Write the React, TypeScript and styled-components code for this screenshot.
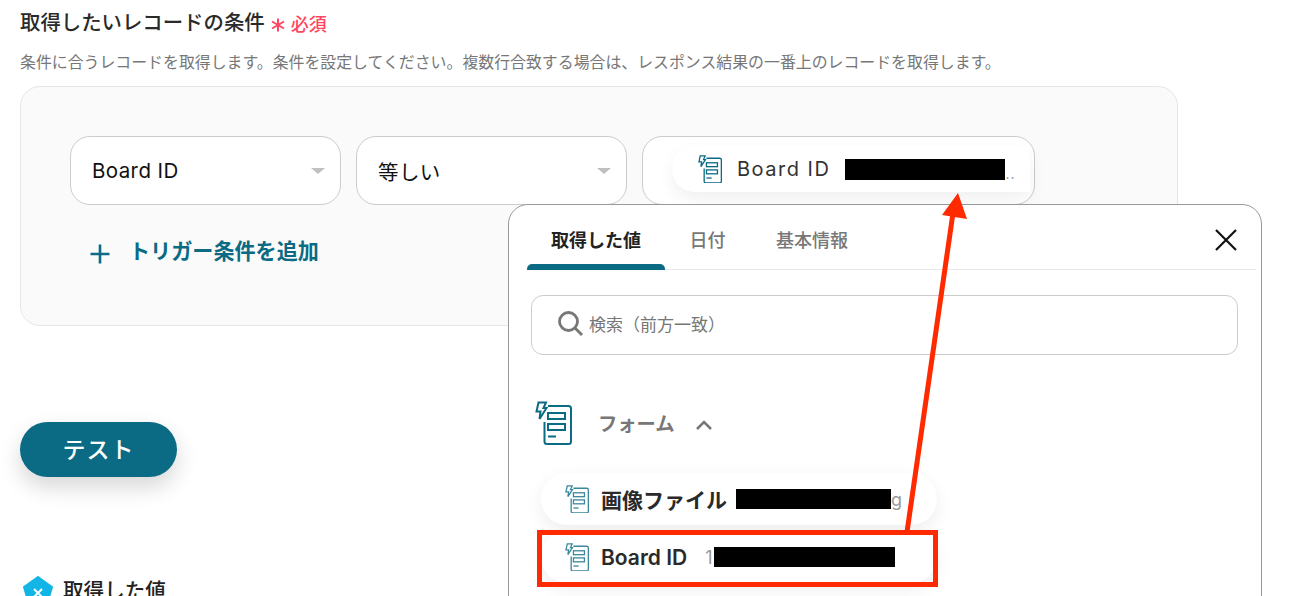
import styled, { createGlobalStyle } from 'styled-components'
import { Fragment } from 'react'

const teal = '#0b6a84'

const GlobalStyle = createGlobalStyle`
  html, body {
    margin: 0;
    background: white;
    font-family: Inter, "Noto Sans CJK JP", "Noto Sans", sans-serif;
  }
`

const Page = styled.div`
  position: relative;
  width: 1290px;
  height: 596px;
  overflow: hidden;
  box-sizing: border-box;
  padding: 10px 0 0 20px;
  color: #222;
`

const TitleRow = styled.div`
  display: flex;
  align-items: center;
  height: 26px;
`

const Title = styled.h2`
  margin: 0;
  font-size: 20.4px;
  line-height: 26px;
  font-weight: 500;
  color: #2a2a2a;
`

const Required = styled.span`
  display: flex;
  align-items: center;
  margin-left: 6px;
  font-size: 18px;
  font-weight: 500;
  color: #ff4560;
  svg {
    margin: 3px 6px 0 0;
  }
`

const Description = styled.p`
  margin: 16px 0 13px;
  font-size: 15.9px;
  line-height: 21px;
  white-space: nowrap;
  color: #777;
`

const Panel = styled.div`
  box-sizing: border-box;
  width: 1158px;
  height: 240px;
  padding: 49px 0 0 49px;
  background: #fafafa;
  border: 1px solid #e6e6e6;
  border-radius: 20px;
`

const FieldRow = styled.div`
  display: flex;
  gap: 15px;
`

const Field = styled.div<{ $width: number; $inset?: number }>`
  position: relative;
  box-sizing: border-box;
  display: flex;
  align-items: center;
  width: ${p => p.$width}px;
  height: 69px;
  padding-left: ${p => p.$inset ?? 21}px;
  background: white;
  border: 1px solid #ccc;
  border-radius: 20px;
  font-size: 20.5px;
  letter-spacing: 0.4px;
  color: #111;
`

const Caret = styled.i`
  position: absolute;
  right: 15px;
  top: 31px;
  width: 0;
  height: 0;
  border-left: 7px solid transparent;
  border-right: 7px solid transparent;
  border-top: 6px solid #c0c0c0;
`

const ValueChip = styled.div`
  display: flex;
  align-items: center;
  box-sizing: border-box;
  width: 358px;
  height: 46px;
  margin: 0 0 3px 9px;
  padding-left: 26px;
  background: white;
  border-radius: 23px 0 0 23px;
  box-shadow: 0 8px 18px rgba(0, 0, 0, 0.06);
  font-size: 20px;
  letter-spacing: 1.5px;
  color: #333;
  white-space: nowrap;
  svg {
    margin-right: 15px;
  }
`

const Redacted = styled.span<{ $width: number; $height: number; $gap: number }>`
  display: inline-block;
  flex: none;
  width: ${p => p.$width}px;
  height: ${p => p.$height}px;
  margin-left: ${p => p.$gap}px;
  background: black;
`

const Dots = styled.span`
  margin-top: 8px;
  font-size: 14px;
  letter-spacing: 1px;
  color: #888;
`

const AddCondition = styled.button`
  display: flex;
  align-items: center;
  margin: 29px 0 0 20px;
  padding: 0;
  background: none;
  border: 0;
  font: inherit;
  font-size: 21.1px;
  font-weight: 600;
  line-height: 36px;
  color: ${teal};
  svg {
    margin: 4px 19px 0 0;
  }
`

const TestButton = styled.button`
  display: block;
  width: 157px;
  height: 55px;
  margin-top: 96px;
  padding: 0 0 4px;
  background: ${teal};
  border: 0;
  border-radius: 28px;
  box-shadow: 0 10px 22px rgba(0, 0, 0, 0.16);
  font: inherit;
  font-size: 23px;
  font-weight: 500;
  letter-spacing: 1px;
  color: white;
`

const ResultHeading = styled.div`
  display: flex;
  align-items: center;
  gap: 10px;
  margin: 99px 0 0 3px;
  font-size: 20.6px;
  line-height: 28px;
  font-weight: 500;
  color: #222;
`

const Popover = styled.div`
  position: absolute;
  left: 508px;
  top: 204px;
  box-sizing: border-box;
  width: 754px;
  height: 420px;
  padding: 0 5px 0 18px;
  background: white;
  border: 1px solid #999;
  border-radius: 20px;
`

const Tabs = styled.div`
  display: flex;
  align-items: stretch;
  height: 64px;
  border-bottom: 1px solid #e8e8e8;
`

const Tab = styled.div<{ $active?: boolean; $width: number }>`
  position: relative;
  box-sizing: border-box;
  display: flex;
  align-items: center;
  justify-content: center;
  width: ${p => p.$width}px;
  padding-top: 4px;
  font-size: 18px;
  font-weight: ${p => (p.$active ? 600 : 500)};
  color: ${p => (p.$active ? '#222' : '#777')};
  &::after {
    content: '';
    display: ${p => (p.$active ? 'block' : 'none')};
    position: absolute;
    left: 0;
    right: 0;
    bottom: -1px;
    height: 6px;
    background: ${teal};
    border-radius: 5px 5px 0 0;
  }
`

const CloseButton = styled.button`
  display: flex;
  margin: 23px 18px 0 auto;
  padding: 0;
  height: 24px;
  background: none;
  border: 0;
`

const SearchBox = styled.div`
  box-sizing: border-box;
  display: flex;
  align-items: center;
  gap: 6px;
  width: 707px;
  height: 60px;
  margin: 25px 0 0 4px;
  padding: 0 0 4px 25px;
  border: 1px solid #ccc;
  border-radius: 12px;
  font-size: 17px;
  color: #777;
`

const SectionHead = styled.div`
  display: flex;
  align-items: center;
  height: 44px;
  margin: 46px 0 0 8px;
  font-size: 19.3px;
  font-weight: 600;
  color: #777;
  svg:first-child {
    margin-right: 26px;
  }
  svg:last-child {
    margin: 3px 0 0 21px;
  }
`

const ChipList = styled.div`
  display: flex;
  flex-direction: column;
  gap: 6px;
  margin: 28px 0 0 14px;
`

const ResultChip = styled.div`
  box-sizing: border-box;
  display: flex;
  align-items: center;
  width: 396px;
  height: 52px;
  padding-left: 24px;
  background: white;
  border-radius: 26px;
  box-shadow: 0 6px 18px rgba(0, 0, 0, 0.07);
  font-size: 21px;
  font-weight: 600;
  color: #2a2a2a;
  white-space: nowrap;
  svg {
    margin-right: 12px;
  }
`

const ChipExtra = styled.span`
  margin-left: 18px;
  font-size: 18px;
  font-weight: 400;
  color: #999;
`

const TrailingChar = styled.span`
  font-size: 18px;
  font-weight: 400;
  color: #999;
`

const HighlightBox = styled.div`
  position: absolute;
  left: 537px;
  top: 530px;
  box-sizing: border-box;
  width: 401px;
  height: 57px;
  border: 5px solid #ff2a00;
`

const ArrowLayer = styled.svg`
  position: absolute;
  left: 890px;
  top: 185px;
`

const FormIcon = ({ size, opacity = 1 }: { size: number; opacity?: number }) => (
  <svg width={size} height={(size * 44) / 37} viewBox="0 0 37 44" fill="none" stroke={teal} strokeWidth="2" opacity={opacity}>
    <path d="M13 5H33.5Q36 5 36 7.5V40.5Q36 43 33.5 43H12Q9.5 43 9.5 40.5V21" />
    <path d="M3.5 1.5H11L8.5 7H11.5L4.5 18L5.5 10.5H1.5Z" />
    <rect x="13" y="12" width="17" height="6" />
    <rect x="13" y="23" width="17" height="6" />
    <path d="M13 35.5H21" />
  </svg>
)

const fields = [
  { label: 'Board ID', width: 271 },
  { label: '等しい', width: 271 }
]

const App = () => {
  return (
    <Fragment>
      <GlobalStyle />
      <Page>
        <TitleRow>
          <Title>取得したいレコードの条件</Title>
          <Required>
            <svg width="14" height="14" viewBox="0 0 14 14" stroke="#ff4560" strokeWidth="2" fill="none">
              <path d="M7 0.5V13.5M1 3.5L13 10.5M13 3.5L1 10.5" />
            </svg>
            必須
          </Required>
        </TitleRow>
        <Description>
          条件に合うレコードを取得します。条件を設定してください。複数行合致する場合は、レスポンス結果の一番上のレコードを取得します。
        </Description>
        <Panel>
          <FieldRow>
            {fields.map(field => (
              <Field key={field.label} $width={field.width}>
                {field.label}
                <Caret />
              </Field>
            ))}
            <Field $width={393} $inset={20}>
              <ValueChip>
                <FormIcon size={24} />
                Board ID
                <Redacted $width={160} $height={21} $gap={15} />
                <Dots>..</Dots>
              </ValueChip>
            </Field>
          </FieldRow>
          <AddCondition>
            <svg width="20" height="20" viewBox="0 0 20 20" stroke={teal} strokeWidth="2.6" fill="none">
              <path d="M10 0.5V19.5M0.5 10H19.5" />
            </svg>
            トリガー条件を追加
          </AddCondition>
        </Panel>
        <TestButton>テスト</TestButton>
        <ResultHeading>
          <svg width="30" height="30" viewBox="0 0 30 30">
            <path d="M15 1L29 11L24 28H6L1 11Z" fill="#12b5e5" stroke="#12b5e5" strokeWidth="2" strokeLinejoin="round" />
            <path d="M11 13L19 21M19 13L11 21" stroke="white" strokeWidth="2" />
          </svg>
          取得した値
        </ResultHeading>

        <Popover>
          <Tabs>
            <Tab $active $width={138}>取得した値</Tab>
            <Tab $width={85}>日付</Tab>
            <Tab $width={124}>基本情報</Tab>
            <CloseButton aria-label="close">
              <svg width="24" height="24" viewBox="0 0 24 24" stroke="#111" strokeWidth="2.2" fill="none">
                <path d="M2 2L22 22M22 2L2 22" />
              </svg>
            </CloseButton>
          </Tabs>
          <SearchBox>
            <svg width="26" height="26" viewBox="0 0 26 26" stroke="#777" strokeWidth="2.8" fill="none">
              <circle cx="11.5" cy="11.5" r="9" />
              <path d="M18 18L25 25" />
            </svg>
            検索（前方一致）
          </SearchBox>
          <SectionHead>
            <FormIcon size={37} />
            フォーム
            <svg width="16" height="10" viewBox="0 0 16 10" stroke="#777" strokeWidth="2.6" fill="none">
              <path d="M1 9L8 2L15 9" />
            </svg>
          </SectionHead>
          <ChipList>
            <ResultChip>
              <FormIcon size={24} opacity={0.8} />
              画像ファイル
              <Redacted $width={155} $height={20} $gap={9} />
              <TrailingChar>g</TrailingChar>
            </ResultChip>
            <ResultChip>
              <FormIcon size={24} opacity={0.8} />
              Board ID
              <ChipExtra>1</ChipExtra>
              <Redacted $width={181} $height={20} $gap={2} />
            </ResultChip>
          </ChipList>
        </Popover>

        <HighlightBox />
        <ArrowLayer width="90" height="350" viewBox="0 0 90 350">
          <path d="M17 347L63 28" stroke="#ff2a00" strokeWidth="5" fill="none" />
          <path d="M68 8L52 30L77 34Z" fill="#ff2a00" />
        </ArrowLayer>
      </Page>
    </Fragment>
  )
}

export default App
